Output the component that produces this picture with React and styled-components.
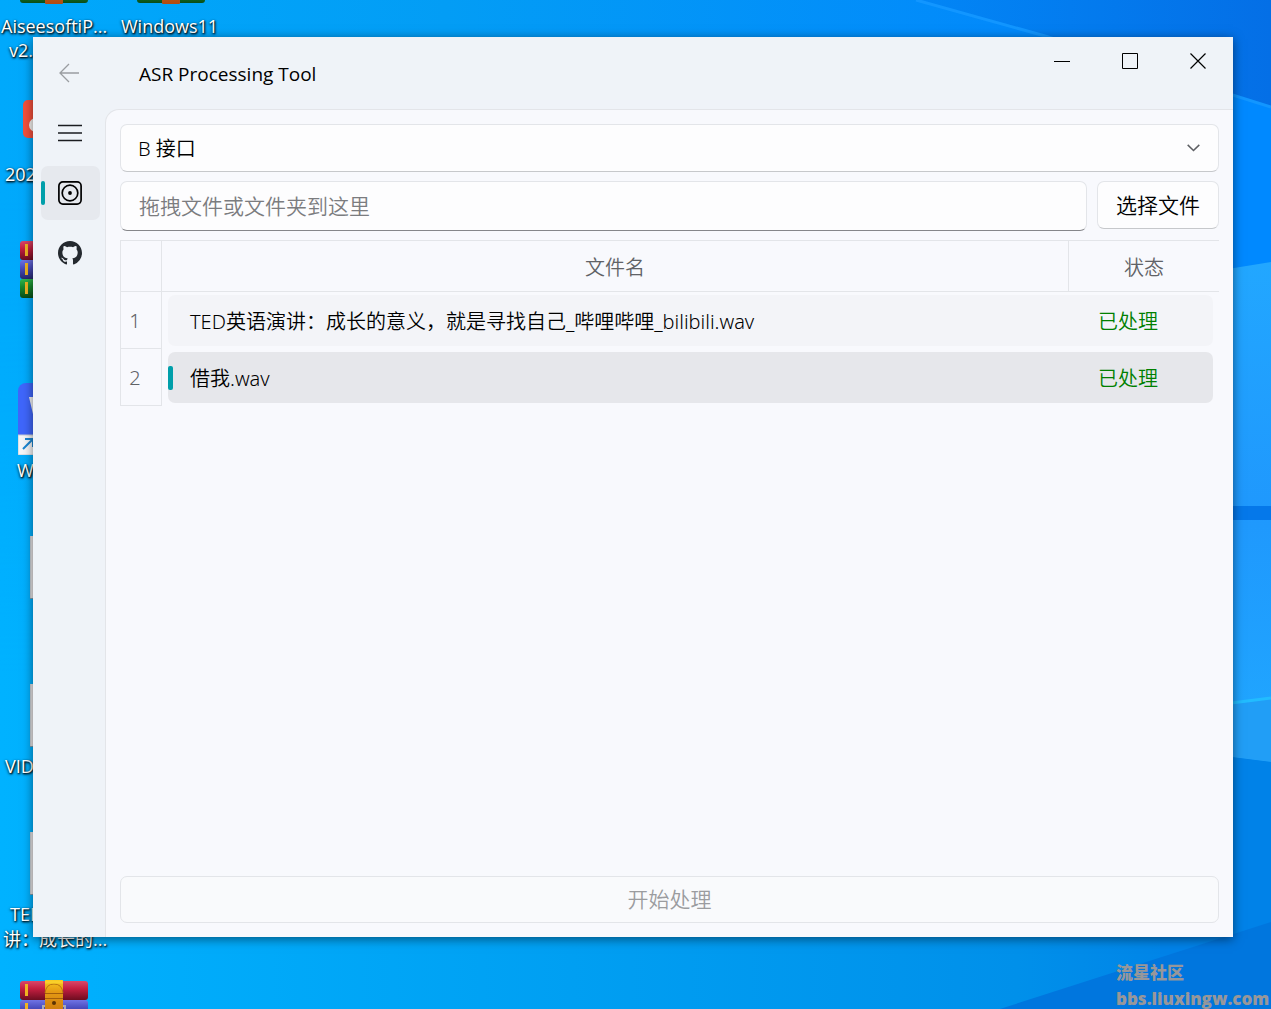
import React, { useState } from "react";
import styled, { createGlobalStyle, css } from "styled-components";

const colors = {
  window: "#eff3f8",
  panel: "#f8f9fd",
  field: "#fdfdfe",
  line: "#e3e5e9",
  accent: "#009faa",
  done: "#008000",
  muted: "#606266",
};

const fonts = {
  ui: `"Noto Sans", "Noto Sans CJK SC", sans-serif`,
  label: `"Open Sans", "Noto Sans CJK SC", sans-serif`,
};

const GlobalStyle = createGlobalStyle`
  *, *::before, *::after {
    box-sizing: border-box;
  }
  body {
    margin: 0;
    font-family: ${fonts.ui};
  }
  button, input, select {
    font-family: inherit;
    font-weight: inherit;
    margin: 0;
  }
`;

/* ---------- desktop ---------- */

const Desktop = styled.div`
  position: relative;
  display: flex;
  min-height: 100vh;
  padding: 37px 38px 72px 33px;
  overflow: hidden;
  font-weight: 350;
`;

const WallpaperSvg = styled.svg`
  position: absolute;
  inset: 0;
  width: 100%;
  height: 100%;
`;

const DesktopItem = styled.div`
  position: absolute;
  left: ${(props) => props.$x}px;
  top: ${(props) => props.$y}px;
  svg {
    display: block;
  }
`;

const DesktopLabel = styled(DesktopItem)`
  color: #ffffff;
  font-family: ${fonts.label};
  font-size: 18px;
  font-weight: 400;
  line-height: 24px;
  white-space: nowrap;
  text-shadow: 1px 1px 2px #000000, 0 1px 3px rgba(0, 0, 0, 0.8);
`;

const Watermark = styled.div`
  position: absolute;
  right: 0;
  bottom: -3px;
  width: 155px;
  color: #97979a;
  font-family: ${fonts.label};
  font-size: 17px;
  font-weight: 800;
  line-height: 26px;
  white-space: nowrap;
`;

/* ---------- window ---------- */

const Window = styled.main`
  position: relative;
  display: flex;
  flex: 1;
  flex-direction: column;
  background: ${colors.window};
  box-shadow: 0 2px 10px rgba(0, 0, 0, 0.5);
`;

const TitleBar = styled.header`
  display: flex;
  height: 72px;
  padding-right: 1px;
`;

const BackButton = styled.button`
  display: flex;
  justify-content: center;
  align-items: center;
  width: 72px;
  padding: 0;
  border: none;
  background: none;
  color: #9a9da1;
`;

const Title = styled.h1`
  flex: 1;
  margin: 0;
  padding-left: 34px;
  font-family: ${fonts.label};
  font-size: 19px;
  font-weight: 400;
  line-height: 74px;
`;

const WindowButton = styled.button`
  display: flex;
  justify-content: center;
  align-items: center;
  width: 68px;
  height: 48px;
  padding: 0;
  border: none;
  background: none;
  color: #000000;
`;

const Body = styled.div`
  display: flex;
  flex: 1;
`;

const Sidebar = styled.nav`
  display: flex;
  flex-direction: column;
  gap: 6px;
  width: 72px;
  padding: 0 5px 0 8px;
`;

const NavButton = styled.button`
  display: flex;
  justify-content: center;
  align-items: center;
  position: relative;
  height: 54px;
  margin-top: ${(props) => (props.$first ? -3 : 0)}px;
  padding: 0 1px 0 0;
  border: none;
  border-radius: 7px;
  background: none;
  color: #000000;
  ${(props) =>
    props.$active &&
    css`
      background: #e6e9ee;
      &::before {
        content: "";
        position: absolute;
        left: 0;
        top: 15px;
        width: 4px;
        height: 24px;
        border-radius: 2px;
        background: ${colors.accent};
      }
    `}
`;

const Panel = styled.section`
  display: flex;
  flex: 1;
  flex-direction: column;
  gap: 9px;
  padding: 14px;
  border-top: 1px solid ${colors.line};
  border-left: 1px solid ${colors.line};
  border-top-left-radius: 14px;
  background: ${colors.panel};
`;

const SelectWrap = styled.div`
  display: grid;
  align-items: center;
  > * {
    grid-area: 1 / 1;
  }
  svg {
    justify-self: end;
    margin-right: 19px;
    pointer-events: none;
  }
`;

const fieldBox = css`
  border: 1px solid ${colors.line};
  border-radius: 7px;
  background: ${colors.field};
  color: #000000;
  outline: none;
`;

const Select = styled.select`
  ${fieldBox}
  appearance: none;
  width: 100%;
  height: 48px;
  padding: 0 17px;
  border-bottom-color: #c6c8cb;
  font-size: 20px;
`;

const FileRow = styled.div`
  display: flex;
  align-items: flex-start;
  gap: 10px;
`;

const PathInput = styled.input`
  ${fieldBox}
  flex: 1;
  min-width: 0;
  height: 50px;
  padding: 0 18px;
  border-bottom-color: #85868a;
  font-size: 21px;
  &::placeholder {
    color: #7b7c7f;
    opacity: 1;
  }
`;

const PickButton = styled.button`
  ${fieldBox}
  width: 122px;
  height: 48px;
  padding: 0 0 3px;
  border-bottom-color: #c6c8cb;
  font-size: 21px;
`;

const TableArea = styled.div`
  flex: 1;
`;

const Table = styled.table`
  width: 100%;
  border-collapse: separate;
  border-spacing: 0;
  table-layout: fixed;
  font-size: 20px;
`;

const HeadCell = styled.th`
  width: ${(props) => (props.$width ? `${props.$width}px` : "auto")};
  height: 52px;
  padding: 0;
  border: solid ${colors.line};
  border-width: 1px ${(props) => (props.$last ? 0 : 1)}px 1px
    ${(props) => (props.$first ? 1 : 0)}px;
  color: ${colors.muted};
  font-weight: 350;
`;

const IndexCell = styled.th`
  height: 57px;
  padding: 0 12px 0 0;
  border: solid ${colors.line};
  border-width: 0 1px 1px 1px;
  color: ${colors.muted};
  font-weight: 350;
`;

const Cell = styled.td`
  padding: ${(props) => (props.$status ? "3px 6px 3px 0" : "3px 0 3px 6px")};
`;

const CellFill = styled.div`
  display: flex;
  align-items: center;
  height: 51px;
  padding-left: ${(props) => (props.$status ? 29 : 22)}px;
  border-radius: ${(props) => (props.$status ? "0 7px 7px 0" : "7px 0 0 7px")};
  background: ${(props) => (props.$selected ? "#e6e7eb" : "#f3f4f8")};
  color: ${(props) => (props.$status ? colors.done : "#000000")};
  white-space: nowrap;
  ${(props) =>
    props.$selected &&
    !props.$status &&
    css`
      padding-left: 0;
      &::before {
        content: "";
        width: 5px;
        height: 24px;
        margin-right: 17px;
        border-radius: 2px;
        background: ${colors.accent};
      }
    `}
`;

const StartButton = styled.button`
  height: 47px;
  padding: 0 0 3px;
  border: 1px solid ${colors.line};
  border-radius: 7px;
  background: #f9fafc;
  color: #9b9c9f;
  font-size: 21px;
`;

/* ---------- drawings ---------- */

const Wallpaper = () => (
  <WallpaperSvg viewBox="0 0 1271 1009" preserveAspectRatio="none" aria-hidden="true">
    <defs>
      <linearGradient id="sky" x1="0" y1="0" x2="1" y2="0">
        <stop offset="0" stopColor="#00a9fc" />
        <stop offset="0.35" stopColor="#039df5" />
        <stop offset="0.8" stopColor="#0289fb" />
        <stop offset="1" stopColor="#0089ff" />
      </linearGradient>
      <linearGradient id="floor" x1="0" y1="0" x2="1" y2="0">
        <stop offset="0" stopColor="#00b2ff" />
        <stop offset="0.45" stopColor="#009ff2" />
        <stop offset="0.8" stopColor="#0090ea" />
        <stop offset="1" stopColor="#007de6" />
      </linearGradient>
      <linearGradient id="fade" x1="0" y1="0" x2="0" y2="1">
        <stop offset="0" stopColor="#000000" />
        <stop offset="0.6" stopColor="#ffffff" />
      </linearGradient>
      <mask id="floorMask">
        <rect y="200" width="1271" height="809" fill="url(#fade)" />
      </mask>
      <linearGradient id="corner" x1="0" y1="0" x2="1" y2="0">
        <stop offset="0" stopColor="#0286f6" />
        <stop offset="1" stopColor="#046fe6" />
      </linearGradient>
      <linearGradient id="pane" x1="0" y1="0" x2="0" y2="1">
        <stop offset="0" stopColor="#22a7ff" />
        <stop offset="0.5" stopColor="#1f98fd" />
        <stop offset="1" stopColor="#20a8ff" />
      </linearGradient>
    </defs>
    <rect width="1271" height="1009" fill="url(#sky)" />
    <rect y="200" width="1271" height="809" fill="url(#floor)" mask="url(#floorMask)" />
    <path d="M1160 70L1271 107V262L1160 280Z" fill="#0089ff" />
    <path d="M916 0H1271V107L1045 36Z" fill="url(#corner)" />
    <path d="M916 0L1045 36L1271 107" fill="none" stroke="#1296ff" strokeWidth="3" />
    <path d="M1160 280L1271 262V762L1160 748Z" fill="url(#pane)" />
    <path d="M1160 506H1271V520H1160Z" fill="#0578ea" />
    <path d="M1160 712L1271 698V762L1160 748Z" fill="#219ef6" />
    <path d="M1160 712L1271 698" stroke="#22bcff" strokeWidth="3" />
    <path d="M1160 748L1271 762V925L1160 960Z" fill="#0082e8" />
    <path d="M1000 1009L1271 922V1009Z" fill="#0076de" />
  </WallpaperSvg>
);

const ArchiveIcon = () => (
  <svg width="68" height="59" viewBox="0 0 68 59" aria-hidden="true">
    <defs>
      <linearGradient id="redBook" x1="0" y1="0" x2="0" y2="1">
        <stop offset="0" stopColor="#d9486a" />
        <stop offset="0.4" stopColor="#c51f41" />
        <stop offset="1" stopColor="#6d0d20" />
      </linearGradient>
      <linearGradient id="blueBook" x1="0" y1="0" x2="0" y2="1">
        <stop offset="0" stopColor="#6f73e4" />
        <stop offset="0.4" stopColor="#4b4ec0" />
        <stop offset="1" stopColor="#25276e" />
      </linearGradient>
      <linearGradient id="greenBook" x1="0" y1="0" x2="0" y2="1">
        <stop offset="0" stopColor="#2fb64a" />
        <stop offset="0.4" stopColor="#168a2e" />
        <stop offset="1" stopColor="#0a4d18" />
      </linearGradient>
      <linearGradient id="belt" x1="0" y1="0" x2="0" y2="1">
        <stop offset="0" stopColor="#f7c81e" />
        <stop offset="0.2" stopColor="#e59a14" />
        <stop offset="0.6" stopColor="#c9760d" />
        <stop offset="1" stopColor="#b34a12" />
      </linearGradient>
    </defs>
    <rect y="1" width="68" height="19" rx="3" fill="url(#redBook)" />
    <rect y="20" width="68" height="19" rx="3" fill="url(#blueBook)" />
    <rect y="39" width="68" height="19" rx="3" fill="url(#greenBook)" />
    <path d="M5 4h3v12H5zM5 23h3v12H5zM5 42h3v12H5z" fill="#efb321" />
    <path d="M23 30v-4h22v4" fill="none" stroke="#a9abb5" strokeWidth="2" />
    <rect x="25" width="18" height="59" rx="1" fill="url(#belt)" />
    <path d="M25 13Q26 4 34 4T43 13" fill="none" stroke="#b8740f" />
    <path d="M25 13.5h18M25 18.5h18" fill="none" stroke="#a35e0b" />
    <path d="M25 0.5h18v3H25z" fill="#f9d02a" />
    <circle cx="34" cy="23" r="2" fill="#5c3304" />
  </svg>
);

const RedAppIcon = () => (
  <svg width="40" height="40" viewBox="0 0 40 40" aria-hidden="true">
    <rect width="40" height="38" rx="5" fill="#f4503c" />
    <circle cx="13" cy="25" r="7" fill="#f6f2f0" />
    <circle cx="14" cy="25" r="3" fill="#f4503c" />
  </svg>
);

const BlueAppIcon = () => (
  <svg width="60" height="72" viewBox="0 0 60 72" aria-hidden="true">
    <rect width="60" height="66" rx="8" fill="#3f66fb" />
    <path d="M11 14h5l5 18 5-18h5l-8 30h-5z" fill="#f3f4f8" />
    <path d="M0 52h20v20H0z" fill="#f5f6f8" stroke="#c9ccd2" />
    <path d="M5 66L14 57M7 56h8v8" fill="none" stroke="#1b87d4" strokeWidth="2" />
  </svg>
);

const DocumentIcon = () => (
  <svg width="48" height="63" viewBox="0 0 48 63" aria-hidden="true">
    <path d="M0 0h48v62H0z" fill="#e9e6e8" />
    <path d="M0 62.5h48" stroke="#7d9db0" />
    <path d="M0.5 0v62" stroke="#c9cfd6" />
  </svg>
);

const BackIcon = () => (
  <svg width="20" height="20" viewBox="0 0 20 20" aria-hidden="true">
    <path d="M20 10H1M10 1L1 10l9 9" fill="none" stroke="currentColor" strokeWidth="1.3" />
  </svg>
);

const MinimizeIcon = () => (
  <svg width="16" height="16" viewBox="0 0 16 16" aria-hidden="true">
    <path d="M0 8.5h16" stroke="currentColor" />
  </svg>
);

const MaximizeIcon = () => (
  <svg width="16" height="16" viewBox="0 0 16 16" aria-hidden="true">
    <path d="M0.5 0.5h15v15h-15z" fill="none" stroke="currentColor" />
  </svg>
);

const CloseIcon = () => (
  <svg width="16" height="16" viewBox="0 0 16 16" aria-hidden="true">
    <path d="M0.5 0.5l15 15M15.5 0.5l-15 15" stroke="currentColor" strokeWidth="1.2" />
  </svg>
);

const MenuIcon = () => (
  <svg width="24" height="24" viewBox="0 0 24 24" aria-hidden="true">
    <path d="M0 4.5h24M0 12h24M0 19.5h24" stroke="#1b1d20" strokeWidth="1.6" />
  </svg>
);

const DiscIcon = () => (
  <svg width="24" height="24" viewBox="0 0 24 24" fill="none" stroke="currentColor" strokeWidth="1.7" aria-hidden="true">
    <rect x="0.9" y="0.9" width="22.2" height="22.2" rx="4" />
    <circle cx="12" cy="12" r="7.8" />
    <circle cx="12" cy="12" r="1.9" fill="currentColor" stroke="none" />
  </svg>
);

const GithubIcon = () => (
  <svg width="24" height="24" viewBox="0 0 16 16" aria-hidden="true">
    <path
      fill="#24292f"
      d="M8 0C3.58 0 0 3.58 0 8c0 3.54 2.29 6.53 5.47 7.59.4.07.55-.17.55-.38 0-.19-.01-.82-.01-1.49-2.01.37-2.53-.49-2.69-.94-.09-.23-.48-.94-.82-1.13-.28-.15-.68-.52-.01-.53.63-.01 1.08.58 1.23.82.72 1.21 1.87.87 2.33.66.07-.52.28-.87.51-1.07-1.78-.2-3.64-.89-3.64-3.95 0-.87.31-1.59.82-2.15-.08-.2-.36-1.02.08-2.12 0 0 .67-.21 2.2.82.64-.18 1.32-.27 2-.27s1.36.09 2 .27c1.53-1.04 2.2-.82 2.2-.82.44 1.1.16 1.92.08 2.12.51.56.82 1.27.82 2.15 0 3.07-1.87 3.75-3.65 3.95.29.25.54.73.54 1.48 0 1.07-.01 1.93-.01 2.2 0 .21.15.46.55.38A8.01 8.01 0 0 0 16 8c0-4.42-3.58-8-8-8z"
    />
  </svg>
);

const ChevronIcon = () => (
  <svg width="13" height="8" viewBox="0 0 13 8" aria-hidden="true">
    <path d="M0.7 0.9l5.8 5.6 5.8-5.6" fill="none" stroke="#5d5f63" strokeWidth="1.5" />
  </svg>
);

/* ---------- data ---------- */

const desktopIcons = [
  { x: 20, y: -55, Icon: ArchiveIcon },
  { x: 137, y: -55, Icon: ArchiveIcon },
  { x: 23, y: 100, Icon: RedAppIcon },
  { x: 20, y: 240, Icon: ArchiveIcon },
  { x: 18, y: 383, Icon: BlueAppIcon },
  { x: 30, y: 536, Icon: DocumentIcon },
  { x: 30, y: 684, Icon: DocumentIcon },
  { x: 30, y: 832, Icon: DocumentIcon },
  { x: 20, y: 980, Icon: ArchiveIcon },
];

const desktopLabels = [
  { x: 1, y: 14, text: "AiseesoftiP..." },
  { x: 9, y: 38, text: "v2." },
  { x: 121, y: 14, text: "Windows11" },
  { x: 5, y: 162, text: "202" },
  { x: 17, y: 458, text: "W" },
  { x: 5, y: 754, text: "VID" },
  { x: 10, y: 902, text: "TED" },
  { x: 3, y: 927, text: "讲：成长的..." },
];

const files = [
  { name: "TED英语演讲：成长的意义，就是寻找自己_哔哩哔哩_bilibili.wav", status: "已处理" },
  { name: "借我.wav", status: "已处理" },
];

const FileTable = () => {
  const [selected, setSelected] = useState(1);
  return (
    <Table>
      <thead>
        <tr>
          <HeadCell $width={42} $first aria-label="#" />
          <HeadCell scope="col">文件名</HeadCell>
          <HeadCell scope="col" $width={150} $last>
            状态
          </HeadCell>
        </tr>
      </thead>
      <tbody>
        {files.map((file, i) => (
          <tr key={file.name} onClick={() => setSelected(i)}>
            <IndexCell scope="row">{i + 1}</IndexCell>
            <Cell>
              <CellFill $selected={selected === i}>{file.name}</CellFill>
            </Cell>
            <Cell $status>
              <CellFill $status $selected={selected === i}>
                {file.status}
              </CellFill>
            </Cell>
          </tr>
        ))}
      </tbody>
    </Table>
  );
};

const App = () => (
  <>
    <GlobalStyle />
    <Desktop>
      <Wallpaper />
      {desktopIcons.map(({ x, y, Icon }) => (
        <DesktopItem key={`${x}-${y}`} $x={x} $y={y}>
          <Icon />
        </DesktopItem>
      ))}
      {desktopLabels.map(({ x, y, text }) => (
        <DesktopLabel key={text} $x={x} $y={y}>
          {text}
        </DesktopLabel>
      ))}
      <Window>
        <TitleBar>
          <BackButton aria-label="Back" disabled>
            <BackIcon />
          </BackButton>
          <Title>ASR Processing Tool</Title>
          <WindowButton aria-label="Minimize">
            <MinimizeIcon />
          </WindowButton>
          <WindowButton aria-label="Maximize">
            <MaximizeIcon />
          </WindowButton>
          <WindowButton aria-label="Close">
            <CloseIcon />
          </WindowButton>
        </TitleBar>
        <Body>
          <Sidebar>
            <NavButton $first aria-label="Menu">
              <MenuIcon />
            </NavButton>
            <NavButton $active aria-label="ASR">
              <DiscIcon />
            </NavButton>
            <NavButton aria-label="GitHub">
              <GithubIcon />
            </NavButton>
          </Sidebar>
          <Panel>
            <SelectWrap>
              <Select aria-label="接口" defaultValue="B">
                <option value="B">B 接口</option>
              </Select>
              <ChevronIcon />
            </SelectWrap>
            <FileRow>
              <PathInput aria-label="文件" placeholder="拖拽文件或文件夹到这里" />
              <PickButton>选择文件</PickButton>
            </FileRow>
            <TableArea>
              <FileTable />
            </TableArea>
            <StartButton disabled>开始处理</StartButton>
          </Panel>
        </Body>
      </Window>
      <Watermark>
        流星社区
        <br />
        bbs.liuxingw.com
      </Watermark>
    </Desktop>
  </>
);

export default App;
